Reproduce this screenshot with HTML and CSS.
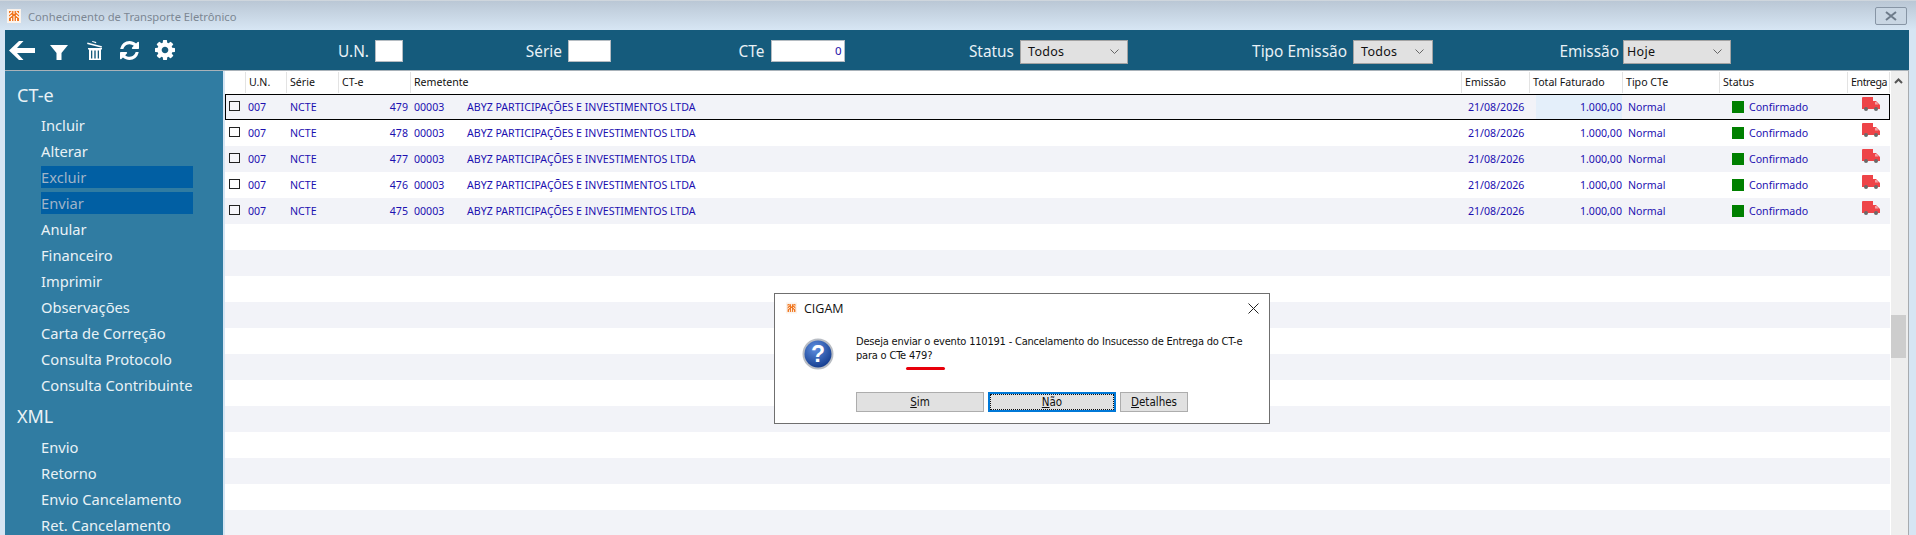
FILE: index.html
```html
<!doctype html>
<html lang="pt-BR">
<head>
	<meta charset="UTF-8">
	<title>Conhecimento de Transporte Eletrônico</title>
	<link rel="stylesheet" href="styles.css">
</head>
<body>
	<svg class="defs" width="0" height="0">
		<defs>
			<symbol id="logo" viewBox="0 0 14 14">
				<rect width="14" height="14" fill="#fbf3ec"/>
				<rect x="2" y="2" width="10" height="10" fill="#f0761f"/>
				<path d="M2 5.500 5 2.500M9 2.500 12 5.500M7 2v3M2 8.500 5 6M12 8.500 9 6M4.500 12V9M9.500 12V9M7 7v5" stroke="#fff" stroke-width="1.100" fill="none"/>
			</symbol>
			<symbol id="truck" viewBox="0 0 18 14">
				<path d="M0 1q0-1 1-1h10v4h3l4 4v4H0z" fill="#ee4448"/>
				<path d="M13 5h1.500l2 2.500H13z" fill="#f3a5a7"/>
				<circle cx="4" cy="12" r="2" fill="#6a6a6a"/>
				<circle cx="14" cy="12" r="2" fill="#6a6a6a"/>
			</symbol>
			<symbol id="chevron" viewBox="0 0 9 5">
				<path d="M.5.500 4.500 4.500 8.500.5" fill="none" stroke="#666" stroke-width="1"/>
			</symbol>
		</defs>
	</svg>

	<div class="window">
		<div class="titlebar">
			<svg class="title-logo"><use href="#logo"/></svg>
			<span class="title-text">Conhecimento de Transporte Eletrônico</span>
			<button class="title-close">
				<svg width="12" height="10" viewBox="0 0 12 10"><path d="M1 1l10 8M11 1 1 9" stroke="#6d7b8a" stroke-width="2"/></svg>
			</button>
		</div>

		<div class="content">
			<div class="toolbar">
				<div class="tool-icons">
					<svg class="icon-back" viewBox="0 0 26 19"><path d="M0 9.500 10 0h4.500L8 7h18v5H8l6.500 7H10z" fill="#fff"/></svg>
					<svg class="icon-filter" viewBox="0 0 18 15"><path d="M0 0h18l-6.500 8v7h-5V8z" fill="#fff"/></svg>
					<svg class="icon-trash" viewBox="0 0 16 19"><path d="M.5 1.500 15 5.300l-.4 1.400L.1 2.900zM5 .8 5.300 0l4 1 -.3 1.200z" fill="#fff"/><path d="M1 7h14v1.500h-1V19H2V8.500H1zM4 9.500V17.500h1.300V9.500zM7.300 9.500V17.500h1.400V9.500zM10.700 9.500V17.500H12V9.500z" fill="#fff" fill-rule="evenodd"/></svg>
					<svg class="icon-refresh" viewBox="128 128 1536 1536"><path d="M1639 1056q0 5-1 7-64 268-268 434.500t-478 166.500q-146 0-282.500-55t-243.500-157l-129 129q-19 19-45 19t-45-19-19-45v-448q0-26 19-45t45-19h448q26 0 45 19t19 45-19 45l-137 137q71 66 161 102t187 36q134 0 250-65t186-179q11-17 53-117 8-23 30-23h192q13 0 22.500 9.500t9.500 22.500zm25-800v448q0 26-19 45t-45 19h-448q-26 0-45-19t-19-45 19-45l138-138q-148-137-349-137-134 0-250 65t-186 179q-11 17-53 117-8 23-30 23h-199q-13 0-22.500-9.500t-9.500-22.500v-7q65-268 270-434.500t480-166.500q146 0 284 55.500t245 156.500l130-129q19-19 45-19t45 19 19 45z" fill="#fff"/></svg>
					<svg class="icon-gear" viewBox="128 128 1536 1536"><path d="M1152 896q0-106-75-181t-181-75-181 75-75 181 75 181 181 75 181-75 75-181zm512-109v222q0 12-8 23t-20 13l-185 28q-19 54-39 91 35 50 107 138 10 12 10 25t-9 23q-27 37-99 108t-94 71q-12 0-26-9l-138-108q-44 23-91 38-16 136-29 186-7 28-36 28h-222q-14 0-24.500-8.500t-11.500-21.500l-28-184q-49-16-90-37l-141 107q-10 9-25 9-14 0-25-11-126-114-165-168-7-10-7-23 0-12 8-23 15-21 51-66.500t54-70.500q-27-50-41-99l-183-27q-13-2-21-12.500t-8-23.500v-222q0-12 8-23t19-13l186-28q14-46 39-92-40-57-107-138-10-12-10-24 0-10 9-23 26-36 98.500-107.500t94.500-71.500q13 0 26 10l138 107q44-23 91-38 16-136 29-186 7-28 36-28h222q14 0 24.500 8.500t11.500 21.500l28 184q49 16 90 37l142-107q9-9 24-9 13 0 25 10 129 119 165 170 7 8 7 22 0 12-8 23-15 21-51 66.500t-54 70.500q26 50 41 98l183 28q13 2 21 12.500t8 23.500z" fill="#fff"/></svg>
				</div>
				<div class="field"><span>U.N.</span><div class="text-box box-un"></div></div>
				<div class="field"><span>Série</span><div class="text-box box-serie"></div></div>
				<div class="field"><span>CTe</span><div class="text-box box-cte">0</div></div>
				<div class="field"><span>Status</span><div class="combo combo-status">Todos<svg><use href="#chevron"/></svg></div></div>
				<div class="field"><span>Tipo Emissão</span><div class="combo combo-tipo">Todos<svg><use href="#chevron"/></svg></div></div>
				<div class="field field-tight"><span>Emissão</span><div class="combo combo-emissao">Hoje<svg><use href="#chevron"/></svg></div></div>
			</div>

			<div class="main">
				<nav class="sidebar">
					<div class="side-title">CT-e</div>
					<div class="side-item">Incluir</div>
					<div class="side-item">Alterar</div>
					<div class="side-item disabled">Excluir</div>
					<div class="side-item disabled">Enviar</div>
					<div class="side-item">Anular</div>
					<div class="side-item">Financeiro</div>
					<div class="side-item">Imprimir</div>
					<div class="side-item">Observações</div>
					<div class="side-item">Carta de Correção</div>
					<div class="side-item">Consulta Protocolo</div>
					<div class="side-item">Consulta Contribuinte</div>
					<div class="side-title side-title-xml">XML</div>
					<div class="side-item">Envio</div>
					<div class="side-item">Retorno</div>
					<div class="side-item">Envio Cancelamento</div>
					<div class="side-item">Ret. Cancelamento</div>
				</nav>

				<div class="grid">
					<div class="grid-body">
						<div class="grid-head">
							<div></div>
							<div class="head-cell">U.N.</div>
							<div class="head-cell">Série</div>
							<div class="head-cell">CT-e</div>
							<div class="head-cell head-rem">Remetente</div>
							<div class="head-cell">Emissão</div>
							<div class="head-cell">Total Faturado</div>
							<div class="head-cell">Tipo CTe</div>
							<div class="head-cell">Status</div>
							<div class="head-cell head-last">Entrega</div>
						</div>

						<div class="row selected">
							<div class="check"><i></i></div><div class="c-un">007</div><div class="c-serie">NCTE</div><div class="c-num">479</div><div class="c-cod">00003</div><div class="c-name">ABYZ PARTICIPAÇÕES E INVESTIMENTOS LTDA</div><div class="c-date">21/08/2026</div><div class="c-total"><span class="total-focus">1.000,00</span></div><div class="c-tipo">Normal</div><div class="c-status"><i></i>Confirmado</div><div class="c-truck"><svg><use href="#truck"/></svg></div>
						</div>
						<div class="row">
							<div class="check"><i></i></div><div class="c-un">007</div><div class="c-serie">NCTE</div><div class="c-num">478</div><div class="c-cod">00003</div><div class="c-name">ABYZ PARTICIPAÇÕES E INVESTIMENTOS LTDA</div><div class="c-date">21/08/2026</div><div class="c-total">1.000,00</div><div class="c-tipo">Normal</div><div class="c-status"><i></i>Confirmado</div><div class="c-truck"><svg><use href="#truck"/></svg></div>
						</div>
						<div class="row">
							<div class="check"><i></i></div><div class="c-un">007</div><div class="c-serie">NCTE</div><div class="c-num">477</div><div class="c-cod">00003</div><div class="c-name">ABYZ PARTICIPAÇÕES E INVESTIMENTOS LTDA</div><div class="c-date">21/08/2026</div><div class="c-total">1.000,00</div><div class="c-tipo">Normal</div><div class="c-status"><i></i>Confirmado</div><div class="c-truck"><svg><use href="#truck"/></svg></div>
						</div>
						<div class="row">
							<div class="check"><i></i></div><div class="c-un">007</div><div class="c-serie">NCTE</div><div class="c-num">476</div><div class="c-cod">00003</div><div class="c-name">ABYZ PARTICIPAÇÕES E INVESTIMENTOS LTDA</div><div class="c-date">21/08/2026</div><div class="c-total">1.000,00</div><div class="c-tipo">Normal</div><div class="c-status"><i></i>Confirmado</div><div class="c-truck"><svg><use href="#truck"/></svg></div>
						</div>
						<div class="row">
							<div class="check"><i></i></div><div class="c-un">007</div><div class="c-serie">NCTE</div><div class="c-num">475</div><div class="c-cod">00003</div><div class="c-name">ABYZ PARTICIPAÇÕES E INVESTIMENTOS LTDA</div><div class="c-date">21/08/2026</div><div class="c-total">1.000,00</div><div class="c-tipo">Normal</div><div class="c-status"><i></i>Confirmado</div><div class="c-truck"><svg><use href="#truck"/></svg></div>
						</div>
						<div class="row"></div><div class="row"></div><div class="row"></div><div class="row"></div>
						<div class="row"></div><div class="row"></div><div class="row"></div><div class="row"></div>
						<div class="row"></div><div class="row"></div><div class="row"></div><div class="row"></div>
					</div>
					<div class="scrollbar">
						<svg class="scroll-up" width="9" height="6" viewBox="0 0 9 6"><path d="M1 5l3.500-3.500L8 5" fill="none" stroke="#555" stroke-width="2"/></svg>
						<div class="scroll-thumb"></div>
					</div>
				</div>
			</div>
		</div>
	</div>

	<div class="dialog">
		<div class="dialog-title">
			<svg class="dialog-logo"><use href="#logo"/></svg>
			<span class="dialog-name">CIGAM</span>
			<svg class="dialog-close" width="11" height="11" viewBox="0 0 11 11"><path d="M.5.500l10 10M10.500.500l-10 10" stroke="#222" stroke-width="1"/></svg>
		</div>
		<div class="dialog-body">
			<svg class="question" width="32" height="32" viewBox="0 0 32 32">
				<defs>
					<radialGradient id="ball" cx="40%" cy="30%" r="75%">
						<stop offset="0" stop-color="#5f8fe0"/>
						<stop offset="1" stop-color="#123a8c"/>
					</radialGradient>
				</defs>
				<circle cx="16" cy="16" r="15.500" fill="#b9bdc4"/>
				<circle cx="16" cy="16" r="13.500" fill="url(#ball)"/>
				<text x="16" y="24" text-anchor="middle" class="question-mark">?</text>
			</svg>
			<p class="dialog-msg">Deseja enviar o evento 110191 - Cancelamento do Insucesso de Entrega do CT-e<br>para o CTe 479?</p>
		</div>
		<div class="dialog-buttons">
			<button class="btn btn-wide"><u>S</u>im</button>
			<button class="btn btn-wide btn-default"><u>N</u>ão</button>
			<button class="btn btn-small"><u>D</u>etalhes</button>
		</div>
		<div class="red-mark"></div>
	</div>
</body>
</html>
```

FILE: styles.css
```css
* {
	box-sizing: border-box;
}
html, body {
	margin: 0;
	height: 535px;
	overflow: hidden;
}
body {
	position: relative;
	font-family: "Noto Sans", sans-serif;
	background: #d6e5f3;
}
.defs {
	position: absolute;
}

/* window frame */
.window {
	height: 535px;
	padding: 0 7px 0 5px;
	background: #d6e5f3;
}
.titlebar {
	display: flex;
	align-items: center;
	height: 30px;
	margin: 0 -7px 0 -5px;
	padding: 1px 9px 0 7px;
	background: linear-gradient(#bac7d5, #d7e6f4);
	border-top: 1px solid #cfd6dd;
}
.title-logo {
	width: 14px;
	height: 14px;
}
.title-text {
	margin-left: 7px;
	font-size: 11.200px;
	color: #7c8793;
}
.title-close {
	display: flex;
	align-items: center;
	justify-content: center;
	width: 32px;
	height: 18px;
	margin-left: auto;
	padding: 0;
	border: 1px solid #8795a5;
	border-radius: 2px;
	background: #c9d6e3;
}

/* top bar with the filters */
.toolbar {
	display: grid;
	grid-template-columns: 180px 218px 208px 233.500px 283.500px 305px 298px;
	align-items: center;
	height: 40px;
	background: #155b7c;
	color: #e8f1f6;
	font-size: 15.400px;
}
.tool-icons {
	display: flex;
	align-items: center;
	height: 40px;
	padding-left: 4px;
}
.tool-icons svg {
	flex: none;
}
.icon-back {
	width: 26px;
	height: 19px;
}
.icon-filter {
	width: 18px;
	height: 15px;
	margin-left: 15px;
	margin-top: 4px;
}
.icon-trash {
	width: 16px;
	height: 19px;
	margin-left: 19px;
	margin-top: 1px;
}
.icon-refresh {
	width: 21px;
	height: 19px;
	margin-left: 16px;
	margin-top: 1px;
}
.icon-gear {
	width: 22px;
	height: 20px;
	margin-left: 14px;
}
.field {
	display: flex;
	align-items: center;
	justify-content: flex-end;
	gap: 6px;
	margin-top: 3px;
}
.field-tight {
	gap: 4px;
}
.text-box {
	height: 22px;
	padding-right: 2px;
	border: 1px solid #b5bcc2;
	background: #fff;
	color: #1c10a8;
	font-size: 11.500px;
	line-height: 20px;
	text-align: right;
	margin-bottom: 1px;
}
.box-un {
	width: 28px;
}
.box-serie {
	width: 43px;
}
.box-cte {
	width: 74px;
}
.combo {
	display: flex;
	align-items: center;
	justify-content: space-between;
	height: 24px;
	padding: 0 8px 0 7px;
	border: 1px solid #a3a3a3;
	background: #e1e1e1;
	color: #111;
	font-size: 12.500px;
	letter-spacing: .3px;
}
.combo svg {
	width: 9px;
	height: 5px;
}
.combo-status {
	width: 108px;
}
.combo-tipo {
	width: 80px;
}
.combo-emissao {
	width: 108px;
	padding-left: 3px;
}

/* left menu */
.main {
	display: flex;
	height: 465px;
	border-top: 1px solid #a9b2b9;
}
.sidebar {
	display: flex;
	flex-direction: column;
	flex: none;
	width: 218px;
	padding-top: 11px;
	background: #307ca2;
	color: #e9f2f6;
	font-size: 14.700px;
	overflow: hidden;
}
.side-title {
	flex: none;
	height: 26px;
	margin: 0 0 4px 12px;
	font-size: 18px;
	line-height: 26px;
}
.side-title-xml {
	margin-top: 5px;
	margin-bottom: 5px;
}
.side-item {
	flex: none;
	width: 152px;
	height: 22px;
	margin: 2px 0 2px 36px;
	line-height: 22px;
	white-space: nowrap;
}
.side-item.disabled {
	background: #015fa3;
	color: #9fb3c7;
}

/* grid */
.grid {
	flex: 1;
	display: flex;
	margin-left: 2px;
	background: #fff;
}
.grid-body {
	flex: none;
	width: 1665px;
}
.grid-head, .row {
	display: grid;
	grid-template-columns: 20px 41px 52px 72px 53px 998px 68px 93px 97px 128px 1fr;
	align-items: center;
	font-size: 10.600px;
	white-space: nowrap;
}
.grid-head {
	height: 23px;
	color: #111;
}
.head-cell {
	height: 21px;
	padding-left: 3px;
	border-left: 1px solid #e3e3e3;
	line-height: 21px;
}
.head-rem {
	grid-column: span 2;
}
.head-last {
	border-right: 1px solid #e3e3e3;
	letter-spacing: -.4px;
}
.row {
	height: 26px;
	color: #1c10b0;
	background: #fff;
}
.row:nth-child(even) {
	background: #f2f3f8;
}
.row.selected {
	outline: 1px solid #000;
	outline-offset: -1px;
}
.check {
	padding-left: 4px;
}
.check i {
	display: block;
	width: 11px;
	height: 10px;
	margin-top: -3px;
	border: 1px solid #222;
	background: #fff;
}
.row:nth-child(even) .check i {
	background: #f6f6fa;
}
.c-un {
	padding-left: 3px;
}
.c-serie {
	padding-left: 4px;
}
.c-num {
	padding-right: 2px;
	text-align: right;
}
.c-cod {
	padding-left: 4px;
}
.c-name {
	padding-left: 4px;
}
.c-date {
	padding-left: 7px;
}
.c-total {
	text-align: right;
}
.total-focus {
	display: block;
	height: 24px;
	margin-left: 7px;
	background: #e4effa;
	line-height: 24px;
}
.c-tipo {
	padding-left: 6px;
}
.c-status {
	display: flex;
	align-items: center;
	padding-left: 13px;
}
.c-status i {
	width: 12px;
	height: 12px;
	margin-right: 5px;
	margin-top: -1px;
	background: #008000;
}
.c-truck {
	padding-left: 15px;
	height: 14px;
	margin-top: -6px;
}
.c-truck svg {
	display: block;
	width: 18px;
	height: 14px;
}
.scrollbar {
	position: relative;
	flex: none;
	width: 18px;
	margin-left: 1px;
	background: #eee;
	border-right: 1px solid #a7abaf;
}
.scroll-up {
	display: block;
	margin: 7px 0 0 3px;
}
.scroll-thumb {
	position: absolute;
	top: 244px;
	left: 0;
	width: 15px;
	height: 43px;
	background: #cdcdcd;
}

/* confirmation dialog */
.dialog {
	position: absolute;
	top: 293px;
	left: 774px;
	width: 496px;
	height: 131px;
	border: 1px solid #6f6f6f;
	background: #fff;
	color: #111;
	font-family: "DejaVu Sans Condensed", "DejaVu Sans", sans-serif;
	font-stretch: condensed;
	font-size: 11px;
}
.dialog-title {
	display: flex;
	align-items: center;
	height: 28px;
	padding: 0 10px 0 11px;
}
.dialog-logo {
	width: 11px;
	height: 12px;
}
.dialog-name {
	margin-left: 7px;
	font-family: "Open Sans", sans-serif;
	font-stretch: normal;
	font-size: 12.500px;
}
.dialog-close {
	margin-left: auto;
}
.dialog-body {
	display: flex;
	height: 70px;
	padding: 14px 0 0 27px;
}
.question {
	flex: none;
	margin-top: 2px;
}
.question-mark {
	font-family: "Liberation Sans", sans-serif;
	font-size: 23px;
	font-weight: bold;
	fill: #fff;
}
.dialog-msg {
	margin: -1px 0 0 22px;
	line-height: 14px;
	letter-spacing: -.2px;
	white-space: nowrap;
}
.dialog-buttons {
	display: flex;
	gap: 4px;
	padding-left: 81px;
}
.btn {
	height: 20px;
	padding: 0;
	border: 1px solid #adadad;
	background: #e1e1e1;
	color: #111;
	font-family: "DejaVu Sans Condensed", "DejaVu Sans", sans-serif;
	font-stretch: condensed;
	font-size: 11.500px;
}
.btn-wide {
	width: 128px;
}
.btn-small {
	width: 68px;
}
.btn-default {
	border: 2px solid #0078d7;
	outline: 1px dotted #111;
	outline-offset: -3px;
}
/* red pen stroke someone drew on top of the screenshot */
.red-mark {
	position: absolute;
	top: 73px;
	left: 131px;
	width: 39px;
	height: 3px;
	border-radius: 2px;
	background: #e8000b;
}
```
